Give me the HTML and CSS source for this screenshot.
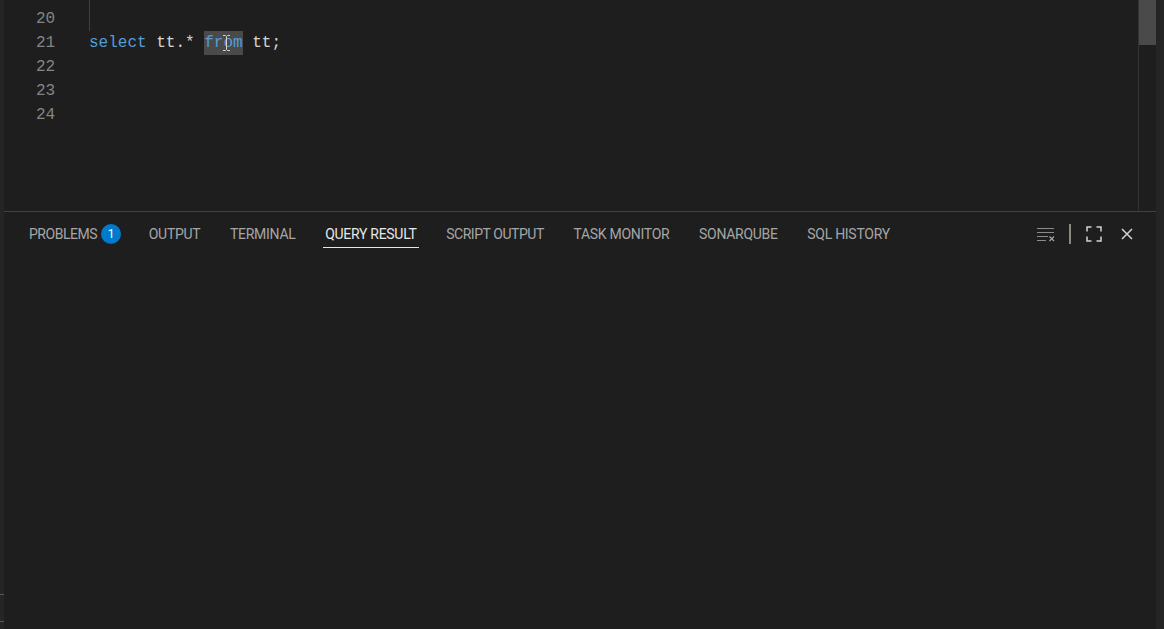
FILE: index.html
```html
<!DOCTYPE html>
<html lang="en">
<head>
<meta charset="utf-8">
<title>Query Result</title>
<link rel="stylesheet" href="styles.css">
</head>
<body>
<div class="window">
  <div class="activity">
    <div class="activity-mark"></div>
    <div class="activity-mark second"></div>
  </div>
  <div class="main">
    <section class="editor">
      <div class="code">
        <div class="line"><span class="num">19</span><span class="guide"></span></div>
        <div class="line"><span class="num">20</span><span class="guide"></span></div>
        <div class="line"><span class="num">21</span><span class="text"><span class="kw">select</span> tt.* <span class="sel kw">from<svg class="cursor" viewBox="0 0 9 16" width="9" height="16"><path d="M1 .5h2.500l1 1 1-1H8M4.500 1.500v13M1 15.500h2.500l1-1 1 1H8" fill="none" stroke="#d8d4c4" stroke-width="1"/></svg></span> tt;</span></div>
        <div class="line"><span class="num">22</span></div>
        <div class="line"><span class="num">23</span></div>
        <div class="line"><span class="num">24</span></div>
      </div>
      <div class="scrollbar"><div class="thumb"></div></div>
    </section>
    <section class="panel">
      <div class="tabs">
        <div class="tab tight">PROBLEMS<span class="badge">1</span></div>
        <div class="tab">OUTPUT</div>
        <div class="tab">TERMINAL</div>
        <div class="tab active">QUERY RESULT</div>
        <div class="tab tight">SCRIPT OUTPUT</div>
        <div class="tab">TASK MONITOR</div>
        <div class="tab">SONARQUBE</div>
        <div class="tab">SQL HISTORY</div>
        <div class="actions">
          <svg class="icon" viewBox="0 0 20 16" width="20" height="16"><path d="M1 2.500h17M1 6.500h17M1 10.500h11M1 14.500h9" fill="none" stroke="#8c8c8c" stroke-width="1"/><path d="M13.500 10.500l4.500 4.500M18 10.500l-4.500 4.500" fill="none" stroke="#a89fb0" stroke-width="1.200"/></svg>
          <span class="divider"></span>
          <svg class="icon" viewBox="0 0 16 16" width="16" height="16"><path d="M1 5.500V1h4.500M10.500 1H15v4.500M15 10.500V15h-4.500M5.500 15H1v-4.500" fill="none" stroke="#d4d4d4" stroke-width="1.500"/></svg>
          <svg class="icon close" viewBox="0 0 14 14" width="14" height="14"><path d="M2 2l10 10M12 2L2 12" fill="none" stroke="#d4d4d4" stroke-width="1.500"/></svg>
        </div>
      </div>
    </section>
  </div>
  <div class="edge"></div>
</div>
</body>
</html>
```
FILE: styles.css
```css
* { box-sizing: border-box; }
html, body { margin: 0; height: 100%; background: #1e1e1e; overflow: hidden; }
.window { display: flex; width: 1164px; height: 629px; }
.activity { width: 4px; flex: none; background: #252526; padding-top: 594px; }
.activity-mark { height: 1px; background: #5a5a5a; }
.activity-mark.second { margin-top: 26px; }
.main { flex: 1; min-width: 0; display: flex; flex-direction: column; }
.edge { width: 8px; flex: none; background: #252526; }
.editor { height: 211px; flex: none; display: flex; overflow: hidden; }
.code { flex: 1; margin-top: -17px; font: 16px/24px "Liberation Mono", monospace; color: #d4d4d4; }
.line { display: flex; height: 24px; }
.num { width: 85px; flex: none; padding-left: 32px; color: #858585; }
.guide { width: 1px; background: #404040; }
.text { white-space: pre; }
.kw { color: #569cd6; }
.sel { display: inline-block; position: relative; height: 24px; background: #4a4a4a; }
.cursor { position: absolute; left: 18px; top: 4px; }
.scrollbar { width: 18px; flex: none; border-left: 1px solid #333; }
.thumb { height: 45px; background: #4a4a4a; }
.panel { flex: 1; border-top: 1px solid #414141; }
.tabs { display: flex; align-items: flex-start; padding: 11px 0 0 23px; gap: 25.6px; font: 14px/22px "Roboto", sans-serif; letter-spacing: -0.28px; color: #a6a6a6; }
.tab { display: flex; align-items: center; height: 25px; padding: 0 2px 3px; white-space: nowrap; }
.tab.tight { letter-spacing: -0.46px; }
.tab.active { color: #e7e7e7; border-bottom: 1px solid #e7e7e7; }
.badge { width: 20px; height: 20px; margin: 0 -2px 0 4px; border-radius: 50%; background: #007acc; color: #fff; font-size: 12px; line-height: 20px; text-align: center; letter-spacing: 0; }
.actions { display: flex; align-items: center; margin-left: auto; height: 22px; padding-right: 22px; }
.icon { display: block; }
.divider { width: 2px; height: 20px; margin: 0 15px 0 13px; background: #8a8a80; }
.close { margin-left: 18px; }
```
